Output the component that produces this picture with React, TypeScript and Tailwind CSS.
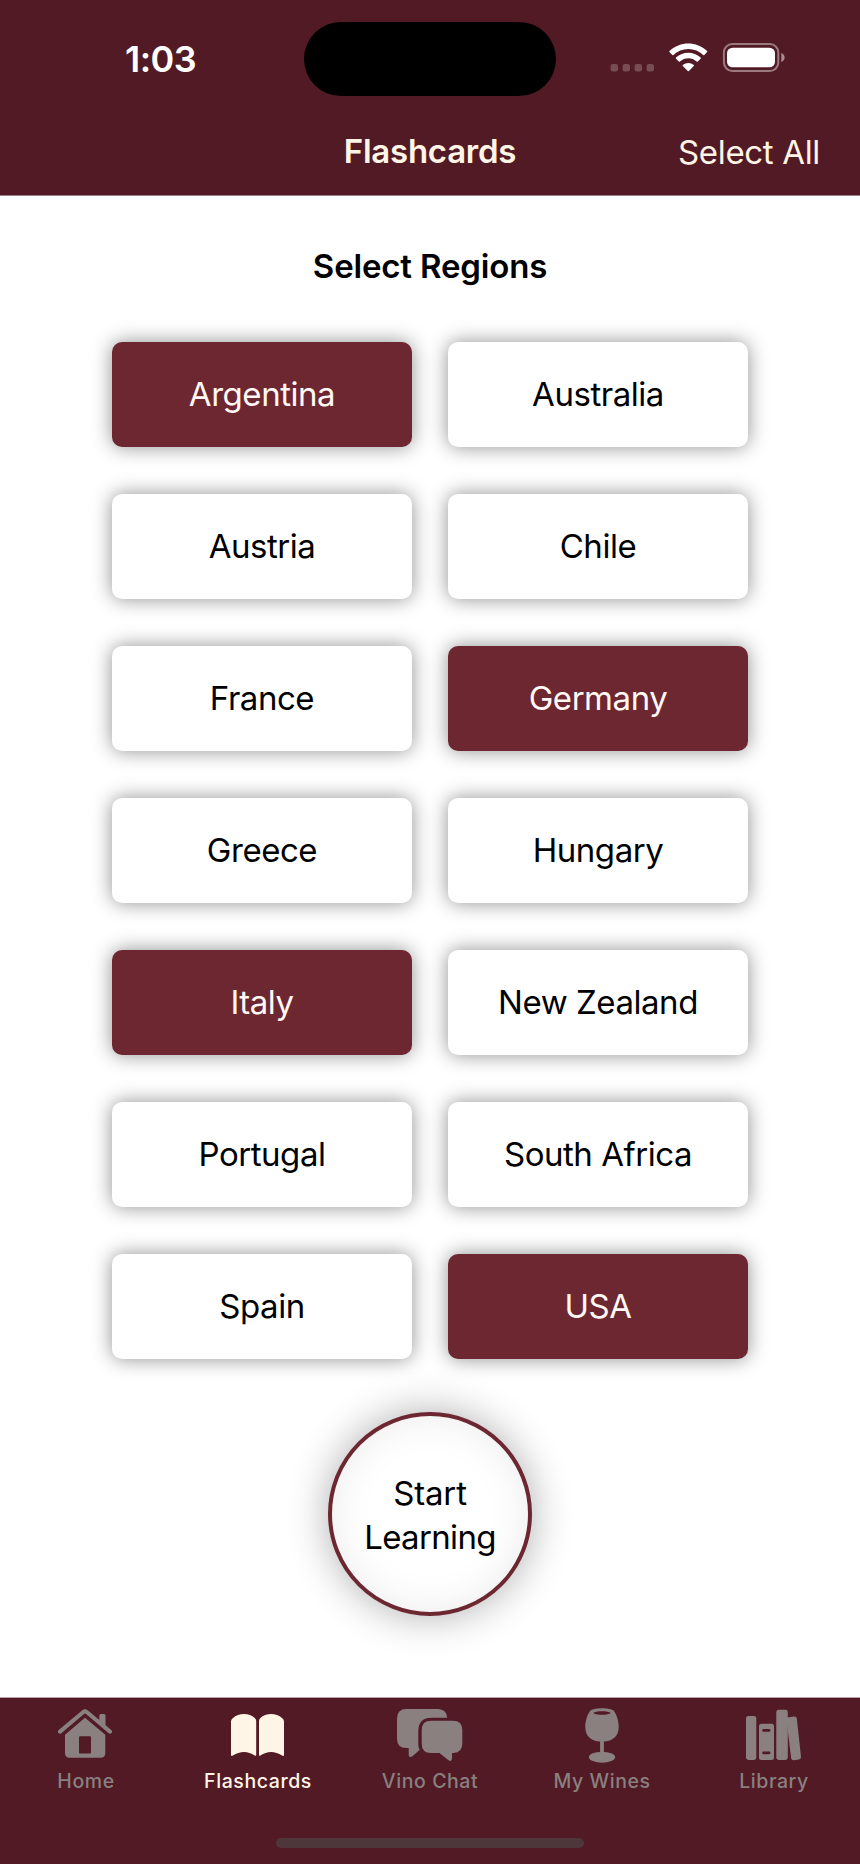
import React from "react";

type Region = { name: string; selected?: boolean };

const regions: Region[] = [
  { name: "Argentina", selected: true },
  { name: "Australia" },
  { name: "Austria" },
  { name: "Chile" },
  { name: "France" },
  { name: "Germany", selected: true },
  { name: "Greece" },
  { name: "Hungary" },
  { name: "Italy", selected: true },
  { name: "New Zealand" },
  { name: "Portugal" },
  { name: "South Africa" },
  { name: "Spain" },
  { name: "USA", selected: true },
];

function StatusIcons() {
  return (
    <svg width="176" height="32" viewBox="610 42 176 32" fill="none">
      <g fill="#fff" opacity=".22">
        <rect x="610.6" y="64" width="7.4" height="7.4" rx="2.2" />
        <rect x="622.6" y="64" width="7.4" height="7.4" rx="2.2" />
        <rect x="634.6" y="64" width="7.4" height="7.4" rx="2.2" />
        <rect x="646.6" y="64" width="7.4" height="7.4" rx="2.2" />
      </g>
      <g fill="#fff">
        <path d="M688.3 48.9C694 48.9 699.3 51.1 703.2 55C703.5 55.3 704 55.3 704.3 55L707.1 52.1C707.4 51.8 707.4 51.3 707.1 51C696.6 40.9 680 40.9 669.5 51C669.2 51.3 669.2 51.8 669.5 52.1L672.3 55C672.6 55.3 673.1 55.3 673.4 55C677.4 51.1 682.7 48.9 688.3 48.9Z" />
        <path d="M688.3 58.3C691.4 58.3 694.4 59.5 696.7 61.6C697 61.9 697.5 61.9 697.8 61.6L700.6 58.7C700.9 58.4 700.9 57.9 700.6 57.6C693.7 51.1 682.9 51.1 676 57.6C675.7 57.9 675.7 58.4 676 58.7L678.8 61.6C679.1 61.9 679.6 61.9 679.9 61.6C682.2 59.5 685.2 58.3 688.3 58.3Z" />
        <path d="M693.8 64.9C694.1 65.2 694.1 65.7 693.8 66L688.9 71C688.6 71.3 688.1 71.3 687.8 71L682.8 66C682.5 65.7 682.5 65.2 682.8 64.9C686 62.2 690.7 62.2 693.8 64.9Z" />
      </g>
      <rect x="723.9" y="44.1" width="54.4" height="26.9" rx="8.4" stroke="#fff" strokeOpacity=".42" strokeWidth="2" />
      <rect x="727" y="47.7" width="48" height="19.6" rx="5.6" fill="#fff" />
      <path d="M781.3 53V62C783.3 61.3 784.6 59.5 784.6 57.5C784.6 55.5 783.3 53.7 781.3 53Z" fill="#fff" fillOpacity=".5" />
    </svg>
  );
}

const HomeIcon = () => (
  <svg width="56" height="56" viewBox="58 1706 56 56" fill="currentColor">
    <path d="M60 1731.6L83 1712.2Q85 1710.6 87 1712.2L110 1731.6" fill="none" stroke="currentColor" strokeWidth="4" strokeLinecap="round" />
    <path d="M99.3 1715.5Q99.3 1714 100.8 1714H104Q105.5 1714 105.5 1715.5V1727L99.3 1722Z" />
    <path fillRule="evenodd" d="M85 1717.8L105.3 1734.8V1753Q105.3 1757.7 100.6 1757.7H69.7Q65 1757.7 65 1753V1734.8ZM80 1736.3Q79 1736.3 79 1737.3V1752.5Q79 1753.5 80 1753.5H90Q91 1753.5 91 1752.5V1737.3Q91 1736.3 90 1736.3Z" />
  </svg>
);

const BookIcon = () => (
  <svg width="56" height="56" viewBox="230 1706 56 56" fill="currentColor">
    <path d="M231 1721.5Q231 1719.5 232.7 1718.3C239 1712.7 249 1712.7 255 1718.2Q256.2 1719.3 256.2 1721V1754.8Q256.2 1756.5 254.7 1755.5C248 1750.8 240 1750.8 232.9 1755.6Q231 1756.7 231 1754.8Z" />
    <path d="M284 1721.5Q284 1719.5 282.3 1718.3C276 1712.7 266 1712.7 260.2 1718.2Q259 1719.3 259 1721V1754.8Q259 1756.5 260.5 1755.5C267 1750.8 275 1750.8 282.1 1755.6Q284 1756.7 284 1754.8Z" />
  </svg>
);

const ChatIcon = () => (
  <svg width="68" height="56" viewBox="396 1706 68 56" fill="currentColor">
    <path d="M406.3 1709H438Q446.5 1709.3 447.2 1717.7H432Q418.3 1717.7 418.3 1731V1744.5Q418.3 1748 419.7 1749.7L413 1755.8Q409 1758.8 408.7 1755V1748H406.3Q397 1748 397 1738.5V1718.5Q397 1709 406.3 1709Z" />
    <path d="M431 1720.7H453Q462.3 1720.7 462.3 1730V1743.5Q462.3 1752.5 453.5 1753H452V1758.8Q451.5 1762 448.5 1760.3L439.5 1753H431Q421.7 1753 421.7 1743.5V1730Q421.7 1720.7 431 1720.7Z" />
  </svg>
);

const WineIcon = () => (
  <svg width="56" height="58" viewBox="574 1706 56 58" fill="currentColor" className="-mb-0.5">
    <path fillRule="evenodd" d="M590 1710.9C594 1707.5 610 1707.5 614 1710.9C617 1715 619 1722 618.7 1728C618.2 1736.5 612.5 1741 603.9 1741.6V1753H600.1V1741.6C591.5 1741 585.8 1736.5 585.3 1728C585 1722 587 1715 590 1710.9ZM593.2 1712.9C595.5 1715.3 608.5 1715.3 610.8 1712.9C608.5 1710.7 595.5 1710.7 593.2 1712.9Z" />
    <ellipse cx="602" cy="1757.2" rx="13.1" ry="5.5" />
  </svg>
);

const LibraryIcon = () => (
  <svg width="58" height="56" viewBox="745 1706 58 56" fill="currentColor">
    <rect x="746" y="1716" width="10.3" height="44" rx="2.4" />
    <path fillRule="evenodd" d="M761.5 1723.7H771.5Q774 1723.7 774 1726.2V1757.5Q774 1760 771.5 1760H761.5Q759 1760 759 1757.5V1726.2Q759 1723.7 761.5 1723.7ZM763.6 1729A1.4 1.4 0 0 0 763.6 1731.8H769A1.4 1.4 0 0 0 769 1729ZM763.6 1751.5A1.4 1.4 0 0 0 763.6 1754.3H769A1.4 1.4 0 0 0 769 1751.5Z" />
    <rect x="776.3" y="1709.7" width="11.5" height="50.3" rx="2.4" />
    <path d="M787 1717.5L794 1716.4Q796.5 1716.2 796.8 1718.6L801 1756.8Q801.2 1759.2 798.8 1759.6L793.8 1760.2Q791.4 1760.3 791.1 1757.9L787 1724Z" />
  </svg>
);

const tabs = [
  { label: "Home", icon: <HomeIcon /> },
  { label: "Flashcards", icon: <BookIcon />, active: true },
  { label: "Vino Chat", icon: <ChatIcon /> },
  { label: "My Wines", icon: <WineIcon /> },
  { label: "Library", icon: <LibraryIcon /> },
];

export default function App() {
  return (
    <div className="flex h-[1864px] w-[860px] flex-col overflow-hidden bg-white font-['Inter',sans-serif] text-black">
      <header className="flex h-[196px] shrink-0 flex-col border-b border-[#a08086] bg-[#511a24]">
        <div className="grid h-[118px] grid-cols-[304px_252px_1fr] pt-[22px]">
          <div className="flex h-[74px] items-center pb-px pl-[125px] text-[36px] font-semibold tracking-[-0.015em] text-white">1:03</div>
          <div className="h-[74px] rounded-full bg-black" />
          <div className="h-[74px] pt-5 pl-[54px]"><StatusIcons /></div>
        </div>
        <div className="grid h-[68px] grid-cols-[1fr_200px_1fr] items-center text-[33px] text-[#fff5e6]">
          <div />
          <h1 className="text-center font-semibold whitespace-nowrap tracking-[-0.008em]">Flashcards</h1>
          <button className="pt-0.5 pr-10 text-right tracking-[-0.01em]">Select All</button>
        </div>
      </header>

      <main className="flex flex-1 flex-col items-center">
        <h2 className="mt-[45px] text-[33px] leading-[50px] font-semibold tracking-[-0.005em]">Select Regions</h2>
        <div className="mt-[51px] grid grid-cols-[300px_300px] gap-x-9 gap-y-[47px]">
          {regions.map((r) => (
            <button
              key={r.name}
              className={`flex h-[105px] items-center justify-center rounded-[10px] pt-px text-[33px] tracking-[-0.014em] shadow-[0_0_20px_rgba(0,0,0,0.44)] ${
                r.selected ? "bg-[#6d2730] text-[#fff8f5]" : "bg-white"
              }`}
            >
              {r.name}
            </button>
          ))}
        </div>
        <button className="mt-[53px] flex size-[204px] flex-col items-center justify-center rounded-full border-4 border-[#6d2730] bg-white pt-px text-[33px] leading-[44px] shadow-[0_0_40px_rgba(0,0,0,0.32),inset_0_0_40px_rgba(0,0,0,0.08)]">
          <span className="tracking-[-0.005em]">Start</span>
          <span className="tracking-[-0.02em]">Learning</span>
        </button>
      </main>

      <footer className="flex h-[167px] shrink-0 flex-col items-center border-t border-[#b9a3a7] bg-[#511a24]">
        <nav className="grid w-full grid-cols-5">
          {tabs.map((t) => (
            <div key={t.label} className={`flex flex-col items-center pt-2 ${t.active ? "text-[#fff5e6]" : "text-[#8a8080]"}`}>
              {t.icon}
              <span className="mt-[7px] text-[19.5px] leading-6 font-medium tracking-[0.03em]">{t.label}</span>
            </div>
          ))}
        </nav>
        <div className="mt-[45px] h-[10px] w-[308px] rounded-full bg-[#4d373a]" />
      </footer>
    </div>
  );
}
